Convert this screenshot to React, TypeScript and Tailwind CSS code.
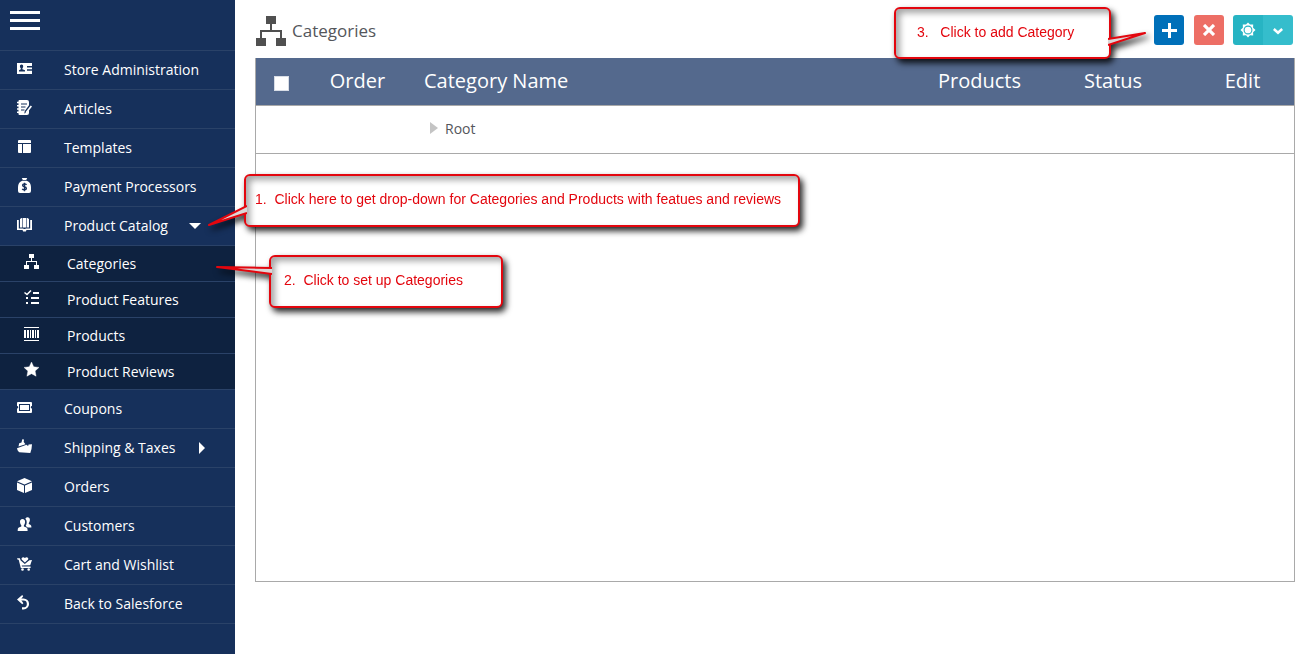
import React, { useState } from "react";

type IconProps = { className?: string };

const Icon: React.FC<{ className?: string; children: React.ReactNode }> = ({ className, children }) => (
    <svg viewBox="0 0 15 15" className={className ?? "h-[15px] w-[15px]"} fill="currentColor" aria-hidden="true">
        {children}
    </svg>
);

const StoreIcon = () => (
    <Icon>
        <path fillRule="evenodd" d="M0 2h15v11H0zM4.5 3.5a1.6 1.6 0 0 0-1.6 1.7c0 1 .4 1.7.9 2.1v1L2 9.2v1.3h6V9.2l-2.6-.9v-1c.5-.4.8-1.1.8-2.1a1.6 1.6 0 0 0-1.7-1.7zM10 5v1.5h5V5zM10 8.3v1.5h5V8.3z" />
    </Icon>
);

const ArticlesIcon = () => (
    <Icon>
        <path d="M2.5 0H10a2 2 0 0 1 2 2v3.2L7.8 11l-.5 2.6 2.5-1 2.2-2.8V13a2 2 0 0 1-2 2H2.5a1 1 0 0 1-1-1v-1H0v-1.4h1.5V9.7H0V8.3h1.5V6.4H0V5h1.5V3.2H0V1.8h1.5V1a1 1 0 0 1 1-1z" />
        <path d="M13.7 5.4l1.3 1-5 6.5-1.5.6.3-1.7z" />
        <path d="M4 4h6M4 7h4.5M4 10h3.5" stroke="#16305b" strokeWidth="1.2" />
    </Icon>
);

const TemplatesIcon = () => (
    <Icon>
        <path d="M2 1h11a1 1 0 0 1 1 1v2H1V2a1 1 0 0 1 1-1zM1 5h4v9H2a1 1 0 0 1-1-1zM6 5h8v8a1 1 0 0 1-1 1H6z" />
    </Icon>
);

const PaymentIcon = () => (
    <Icon>
        <path d="M4.8 0h5.4l-1 2H5.8zM5.2 2.7h4.6C12.500 3.600 14 6 14 9v4a2 2 0 0 1-2 2H3a2 2 0 0 1-2-2V9c0-3 1.500-5.400 4.200-6.300z" />
        <path d="M9.500 6.800c-.5-.7-1.200-.9-2-.9-2.400 0-2.600 2.300-.2 2.800 2.800.5 2.700 3.200.1 3.200-.9 0-1.700-.3-2.200-1M7.500 4.700v8.500" fill="none" stroke="#16305b" strokeWidth="1.400" />
    </Icon>
);

const CatalogIcon = () => (
    <Icon>
        <path d="M3 2L4.500 1H5v9.500H3zM5.600 1h3.800v9.500H5.600zM10 1h.5L12 2v8.500h-2z" />
        <path d="M0 3h1.800v8.500H6l1 .5h1l1-.5h4.200V3H15v10H9.500l-.7 1.500H6.200L5.500 13H0z" />
    </Icon>
);

const TreeIcon: React.FC<IconProps> = ({ className }) => (
    <svg viewBox="0 0 30 30" className={className} fill="currentColor" aria-hidden="true">
        <path d="M10 0h10v8h-4v6h10v8h4v8H20v-8h4v-6H6v6h4v8H0v-8h4v-8h10V8h-4z" />
    </svg>
);

const FeaturesIcon = () => (
    <Icon>
        <path d="M.5 2.500L3 4.500 7 .5" fill="none" stroke="currentColor" strokeWidth="1.500" />
        <path d="M9 2h6v2H9zM7 7h8v2H7zM7 12h8v2H7zM2 7h2v2H2zM2 12h2v2H2z" />
    </Icon>
);

const ProductsIcon = () => (
    <Icon>
        <path d="M0 1h15v1H0zM0 14h15v1H0zM0 4h2v8H0zM3 4h2v8H3zM6 4h1v8H6zM8 4h2v8H8zM11 4h1v8h-1zM13 4h2v8h-2z" />
    </Icon>
);

const StarIcon = () => (
    <Icon>
        <path d="M7.500 0l2.200 4.800 5.300.6-3.900 3.600 1 5.200-4.600-2.500-4.600 2.500 1-5.200L0 5.400l5.300-.6z" stroke="currentColor" strokeWidth="0.400" strokeLinejoin="round" />
    </Icon>
);

const CouponsIcon = () => (
    <Icon>
        <path fillRule="evenodd" d="M1 2h13a1 1 0 0 1 1 1v3a1 1 0 0 0 0 2.500V12a1 1 0 0 1-1 1H1a1 1 0 0 1-1-1V8.500A1 1 0 0 0 0 6V3a1 1 0 0 1 1-1zM2 4v7h11V4z" />
        <path d="M3 5h9v5H3z" />
    </Icon>
);

const ShippingIcon = () => (
    <Icon>
        <path d="M0 9.200l9.500-3.400 1 1 1.200-.5-.3-.9L15 5.200l-.5 4.700-1.200 4.100-11-.7C1.200 12.500.3 11 0 9.200z" />
        <path d="M1.500 7.400l.7-3.200 2.300-.7L5.300.2l1.700.4-.3 2.500 1.800 2.200z" />
    </Icon>
);

const OrdersIcon = () => (
    <Icon>
        <path d="M7.500 0L15 3.200 7.500 6.500 0 3.200zM0 4.500l7 3V15l-7-3zM15 4.500l-7 3V15l7-3z" />
    </Icon>
);

const CustomersIcon = () => (
    <Icon>
        <path d="M5.500 2C3.700 2 2.900 3.400 3 5c.1 1.600.7 2.600 1.300 3.200v1.300L1.800 10.600C1 11 .7 12 .7 14h9.900c0-2-.3-3-1.100-3.400L6.900 9.500V8.200C7.500 7.600 8 6.600 8.100 5 8.200 3.400 7.300 2 5.500 2z" />
        <path d="M8.300 1.800C8.800.7 9.600.2 10.500.2c1.700 0 2.500 1.300 2.400 2.800-.1 1.500-.6 2.400-1.100 3v1l1.500.8c.9.400 1.100 1.200 1.100 2.700h-3.700L8.700 9c.6-1 1-2.200 1-3.500 0-1.500-.4-2.900-1.400-3.700z" />
    </Icon>
);

const CartIcon = () => (
    <Icon>
        <path d="M0 2.200h2.800l.9 2.200L7.800 8l4.600-3.800L15 4l-1.800 5.200-8.500.4.300 1h8.600V12H3.800L1.700 3.700H.7z" />
        <path d="M7.900 6.500L4.700 3.400C3.900 2 6 .3 7.900 2c1.900-1.700 4.100 0 3.200 1.400z" />
        <circle cx="5.500" cy="13.500" r="1.300" />
        <circle cx="11.700" cy="13.500" r="1.300" />
    </Icon>
);

const BackIcon = () => (
    <Icon>
        <path d="M2 4.500h4.500a4 4 0 0 1 0 8.900H5" fill="none" stroke="currentColor" strokeWidth="2.200" />
        <path d="M0 4.500L5.200 0l1 1.200-2.400 3.300 2.600 3.700-1.200 1z" />
    </Icon>
);

const subItems = [
    { label: "Categories", icon: <TreeIcon className="h-[15px] w-[15px]" /> },
    { label: "Product Features", icon: <FeaturesIcon /> },
    { label: "Products", icon: <ProductsIcon /> },
    { label: "Product Reviews", icon: <StarIcon /> },
];

const topItems = [
    { label: "Store Administration", icon: <StoreIcon /> },
    { label: "Articles", icon: <ArticlesIcon /> },
    { label: "Templates", icon: <TemplatesIcon /> },
    { label: "Payment Processors", icon: <PaymentIcon /> },
];

const bottomItems = [
    { label: "Orders", icon: <OrdersIcon /> },
    { label: "Customers", icon: <CustomersIcon /> },
    { label: "Cart and Wishlist", icon: <CartIcon /> },
    { label: "Back to Salesforce", icon: <BackIcon /> },
];

const rowClass = "flex h-[39px] w-full items-center border-b border-[#2a4268] pl-[17px] text-left hover:bg-[#0e2240]";

const NavItem: React.FC<{ label: string; icon: React.ReactNode }> = ({ label, icon }) => (
    <li>
        <a href="#" className={rowClass}>
            <span className="w-[47px] pb-1">{icon}</span>
            {label}
        </a>
    </li>
);

const Sidebar: React.FC = () => {
    const [catalogOpen, setCatalogOpen] = useState(true);

    return (
        <nav className="w-[235px] shrink-0 bg-[#16305b] text-sm text-white">
            <div className="h-[51px] border-b border-[#2a4268] pt-[11px] pl-2.5">
                <button type="button" aria-label="Toggle menu" className="flex flex-col gap-[5px]">
                    <span className="h-[3px] w-[30px] bg-white" />
                    <span className="h-[3px] w-[30px] bg-white" />
                    <span className="h-[3px] w-[30px] bg-white" />
                </button>
            </div>
            <ul>
                {topItems.map((item) => (
                    <NavItem key={item.label} label={item.label} icon={item.icon} />
                ))}
                <li>
                    <button
                        type="button"
                        className={rowClass}
                        aria-expanded={catalogOpen}
                        onClick={() => setCatalogOpen(!catalogOpen)}
                    >
                        <span className="w-[47px] pb-1"><CatalogIcon /></span>
                        Product Catalog
                        <svg viewBox="0 0 12 6" className="ml-[21px] h-1.5 w-3" fill="currentColor" aria-hidden="true">
                            <path d="M0 0h12L6 6z" />
                        </svg>
                    </button>
                    {catalogOpen && (
                        <ul className="bg-[#0e2240]">
                            {subItems.map((item) => (
                                <li key={item.label}>
                                    <a href="#" className="flex h-9 items-center border-b border-[#2a4268] pl-6">
                                        <span className="w-[43px] pb-1">{item.icon}</span>
                                        {item.label}
                                    </a>
                                </li>
                            ))}
                        </ul>
                    )}
                </li>
                <NavItem label="Coupons" icon={<CouponsIcon />} />
                <li>
                    <button type="button" className={rowClass} aria-expanded={false}>
                        <span className="w-[47px] pb-1"><ShippingIcon /></span>
                        Shipping &amp; Taxes
                        <svg viewBox="0 0 6 12" className="ml-6 h-3 w-1.5" fill="currentColor" aria-hidden="true">
                            <path d="M0 0v12l6-6z" />
                        </svg>
                    </button>
                </li>
                {bottomItems.map((item) => (
                    <NavItem key={item.label} label={item.label} icon={item.icon} />
                ))}
            </ul>
        </nav>
    );
};

const Toolbar: React.FC = () => (
    <div className="flex text-white">
        <button type="button" aria-label="Add category" className="mr-2.5 flex h-[30px] w-[30px] items-center justify-center rounded-[3px] bg-[#0070b9]">
            <svg viewBox="0 0 15 15" className="h-[15px] w-[15px]" fill="currentColor" aria-hidden="true">
                <path d="M6 0h3v6h6v3H9v6H6V9H0V6h6z" />
            </svg>
        </button>
        <button type="button" aria-label="Delete category" className="mr-[9px] flex h-[30px] w-[30px] items-center justify-center rounded-[3px] bg-[#ed6e65]">
            <svg viewBox="0 0 12 12" className="h-3 w-3" stroke="currentColor" strokeWidth="3.200" aria-hidden="true">
                <path d="M1 1l10 10M11 1L1 11" />
            </svg>
        </button>
        <button type="button" aria-label="Settings" className="flex h-[30px] w-[30px] items-center justify-center rounded-l-[3px] bg-[#27b4c3]">
            <svg viewBox="0 0 16 16" className="h-4 w-4" aria-hidden="true">
                <path d="M8 .5l2 2.100 3.200-.1-.1 3.300L15.500 8l-2.400 2.200.1 3.200-3.200-.1L8 15.500l-2-2.200-3.200.1.1-3.200L.5 8l2.400-2.200-.1-3.300 3.200.1z" fill="currentColor" />
                <circle cx="8" cy="8" r="3.900" fill="currentColor" stroke="#27b4c3" strokeWidth="1.100" />
            </svg>
        </button>
        <button type="button" aria-label="More actions" className="flex h-[30px] w-[30px] items-center justify-center rounded-r-[3px] bg-[#35bdcc]">
            <svg viewBox="0 0 10 7" className="mt-0.5 h-[7px] w-2.5" fill="none" stroke="currentColor" strokeWidth="2.500" aria-hidden="true">
                <path d="M.8 1L5 4.800 9.200 1" />
            </svg>
        </button>
    </div>
);

const CategoryTable: React.FC = () => (
    <table className="w-full table-fixed text-left">
        <thead>
            <tr className="h-[47px] border-b border-[#a9a9a9] bg-[#54698d] text-xl text-white">
                <th className="w-[51px] text-center">
                    <input
                        type="checkbox"
                        aria-label="Select all"
                        className="mx-auto mt-1 block h-[15px] w-[15px] appearance-none border border-[#d8dde6] bg-white checked:bg-[#0070b9]"
                    />
                </th>
                <th className="w-[101px] text-center font-normal">Order</th>
                <th className="pl-4 font-normal">Category Name</th>
                <th className="w-[111px] text-center font-normal">Products</th>
                <th className="w-[156px] text-center font-normal">Status</th>
                <th className="w-[103px] text-center font-normal">Edit</th>
            </tr>
        </thead>
        <tbody>
            <tr className="h-12 border-b border-[#a9a9a9] text-sm text-[#54565b]">
                <td />
                <td />
                <td className="pl-[22px]">
                    <div className="flex items-center gap-[7px]">
                        <svg viewBox="0 0 8 12" className="mb-0.5 h-3 w-2" fill="#c4c4c4" aria-hidden="true">
                            <path d="M0 0v12l8-6z" />
                        </svg>
                        Root
                    </div>
                </td>
                <td />
                <td />
                <td />
            </tr>
        </tbody>
    </table>
);

type CalloutProps = {
    className: string;
    text: string;
    tailClass: string;
    tailViewBox: string;
    tailPath: string;
};

// Red help bubble, the tail overlaps the border so that the outline stays open there
const Callout: React.FC<CalloutProps> = ({ className, text, tailClass, tailViewBox, tailPath }) => (
    <div className={`absolute drop-shadow-[3px_4px_3px_rgba(0,0,0,0.85)] ${className}`}>
        <p className="h-full rounded-md border-2 border-[#e3060e] bg-white pt-[13px] font-['Liberation_Sans',sans-serif] text-sm whitespace-pre text-[#e3060e] shadow-[inset_4px_4px_6px_rgba(0,0,0,0.35)]">
            {text}
        </p>
        <svg viewBox={tailViewBox} className={`absolute ${tailClass}`} aria-hidden="true">
            <path d={tailPath} fill="#dcd6d6" stroke="#e3060e" strokeWidth="2" strokeLinejoin="round" />
        </svg>
    </div>
);

export default function App() {
    return (
        <div className="relative flex min-h-screen bg-white font-['Open_Sans',sans-serif]">
            <Sidebar />
            <main className="flex min-w-0 flex-1 flex-col pr-[18px] pb-[72px] pl-5">
                <header className="flex justify-between pt-[15px] pr-0.5 pb-3 pl-px">
                    <h1 className="flex items-center gap-1.5 text-[17px] leading-6 text-[#54565b]">
                        <TreeIcon className="mt-px h-[30px] w-[30px] text-[#505050]" />
                        Categories
                    </h1>
                    <Toolbar />
                </header>
                <section className="flex-1 border border-t-0 border-[#a9a9a9]">
                    <CategoryTable />
                </section>
            </main>

            <Callout
                className="top-[174px] left-[244px] h-[53px] w-[556px] [&>p]:pl-[9px]"
                text="1.  Click here to get drop-down for Categories and Products with featues and reviews"
                tailClass="top-[30px] -left-9 h-[24px] w-[39px]"
                tailViewBox="0 0 39 24"
                tailPath="M39 2L1 21L39 9"
            />
            <Callout
                className="top-[255px] left-[269px] h-[53px] w-[234px] [&>p]:pl-[13px]"
                text="2.  Click to set up Categories"
                tailClass="top-[10px] -left-[53px] h-[11px] w-[56px]"
                tailViewBox="0 0 56 11"
                tailPath="M56 3L1 2L56 9"
            />
            <Callout
                className="top-[7px] right-[202px] h-[52px] w-[217px] [&>p]:pl-[21px]"
                text="3.   Click to add Category"
                tailClass="top-[24px] -right-[35px] h-[16px] w-[38px]"
                tailViewBox="0 0 38 16"
                tailPath="M0 8L37 2L0 14"
            />
        </div>
    );
}
